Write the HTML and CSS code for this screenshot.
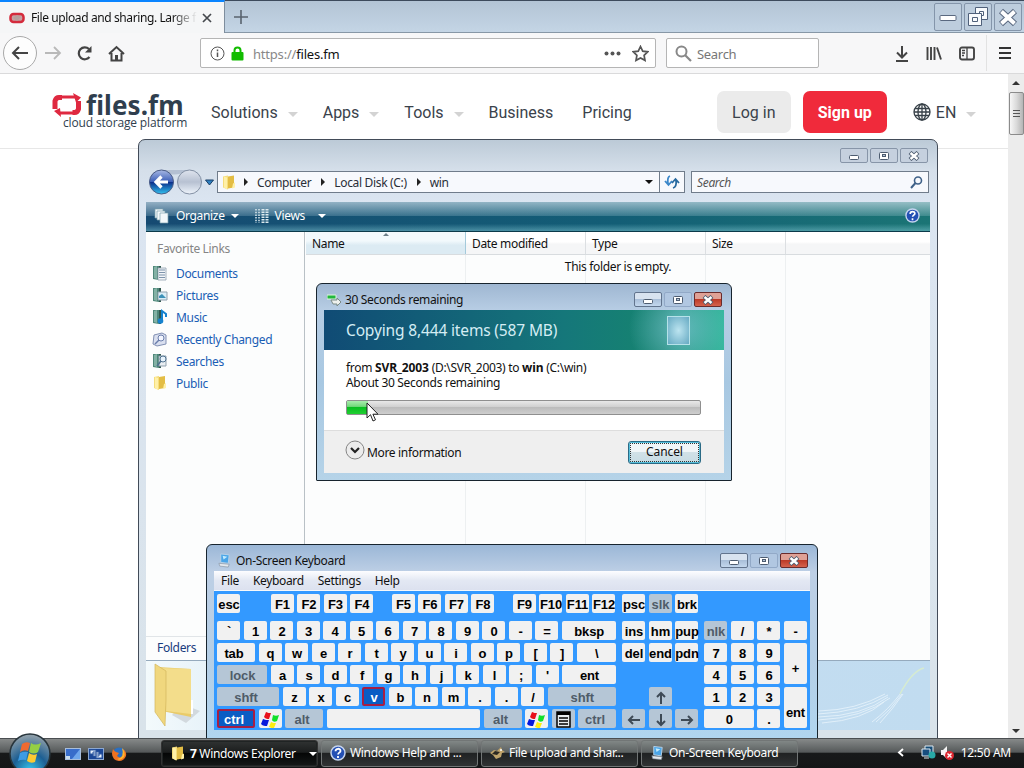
FILE: index.html
```html
<!DOCTYPE html>
<html lang="en">
<head>
    <meta charset="UTF-8">
    <meta name="viewport" content="width=device-width, initial-scale=1.0">
    <title>Desktop</title>
    <link rel="stylesheet" href="styles.css">
</head>
<body>

    <!-- shared icons -->
    <svg class="sprite" width="0" height="0">
        <symbol id="i-folder" viewBox="0 0 16 16"><path d="M2 2l5-1v14l-5-2z" fill="#f5dd7c"/><path d="M7 2l6-1v12l-6 1z" fill="#e3bd45"/><path d="M3 2l3 1v12l-3-2zM12 9l2-1v5l-3 1z" fill="#fff0a8"/></symbol>
        <symbol id="i-min" viewBox="0 0 12 10"><rect x="1.500" y="4.500" width="9" height="4" rx="1" fill="#fff" stroke="#4d5c70"/></symbol>
        <symbol id="i-max" viewBox="0 0 12 10"><rect x="1.500" y="1.500" width="9" height="7" rx="1" fill="#fff" stroke="#4d5c70"/><rect x="4.500" y="3.500" width="3" height="2" fill="#b8c8da" stroke="#4d5c70"/></symbol>
        <symbol id="i-x" viewBox="0 0 12 10"><path d="M2 1.500L10 8.500M10 1.500L2 8.500" stroke="#4d5c70" stroke-width="4.200"/><path d="M2.500 2L9.500 8M9.500 2L2.500 8" stroke="#fff" stroke-width="2.400"/></symbol>
        <symbol id="i-flag" viewBox="0 0 20 18"><path d="M5 1c2 1 3 1 5 1L8 8C6 8 5 8 3 6z" fill="#e8111c"/><path d="M12 4c2 1 4 1 6 0l-2 6c-2 1-4 1-5-1z" fill="#11e02a"/><path d="M2 8c2 1 4 1 6 1l-2 6c-2 0-4 0-6-2z" fill="#0618dc"/><path d="M10 11c2 1 3 1 5 1l-2 5c-2 0-3 0-5-1z" fill="#ffee12"/></symbol>
        <symbol id="i-help" viewBox="0 0 16 16"><circle cx="8" cy="8" r="7" fill="#2450b4" stroke="#c5d4ee" stroke-width="1.500"/><path d="M5.500 6.300c0-3.400 5-3.200 5-.4 0 1.700-2.400 1.800-2.400 3.500M8 11v2" stroke="#fff" stroke-width="1.800" fill="none"/></symbol>
        <symbol id="i-osk" viewBox="0 0 16 16"><path d="M4 1l9 1-1 9-8-1z" fill="#4aa5e8" stroke="#b9d2e8"/><path d="M6 3l5 1-4 3z" fill="#c2ecff"/><path d="M2 11l11 1-1 3-9-1z" fill="#e4e9ee" stroke="#8794a3" stroke-width=".7"/></symbol>
        <symbol id="i-book" viewBox="0 0 16 16"><path d="M1 1h6v14l-6-1z" fill="#4e8779"/><path d="M2 2l3-1v13l-3-1z" fill="#83b1a5"/><path d="M7 1h2v14H7z" fill="#31574f"/></symbol>
    </svg>

    <!-- browser -->
    <div class="browser">
        <div class="tab-strip">
            <div class="tab">
                <svg class="favicon" width="16" height="12" viewBox="0 0 16 12"><rect x="1.500" y="2" width="13" height="8" rx="3" fill="#c9a0a2" stroke="#d42b3c" stroke-width="2.500"/><path d="M4 6l4-3 4 2-4 4z" fill="#b5a09e"/></svg>
                <span class="tab-title">File upload and sharing. Large f</span>
                <svg class="tab-close" width="10" height="10" viewBox="0 0 10 10"><path d="M1 1l8 8M9 1L1 9" stroke="#45484d" stroke-width="1.700"/></svg>
            </div>
            <svg class="new-tab" width="14" height="14" viewBox="0 0 14 14"><path d="M7 0v14M0 7h14" stroke="#59636e" stroke-width="1.600"/></svg>
            <div class="big-controls">
                <span><svg width="20" height="20" viewBox="0 0 20 20"><rect x="2" y="8.500" width="16" height="5" rx="1" fill="#fff" stroke="#5a6980"/></svg></span>
                <span><svg width="22" height="22" viewBox="0 0 22 22"><g fill="#f8fafc" stroke="#4f607a"><path d="M8.500 1.500h12v12h-12z"/><path d="M12.500 5.500h4v4h-4z"/><path d="M1.500 7.500h13v12h-13z"/><path d="M5.500 11.500h5v4h-5z"/></g></svg></span>
                <span><svg width="20" height="20" viewBox="0 0 20 20"><path d="M3 4l14 13M17 4L3 17" stroke="#5a6980" stroke-width="6"/><path d="M3.500 4.500l13 12M16.500 4.500l-13 12" stroke="#fff" stroke-width="4"/></svg></span>
            </div>
        </div>

        <div class="nav-bar">
            <span class="back"><svg width="18" height="16" viewBox="0 0 18 16"><path d="M17 8H2M8 2L2 8l6 6" fill="none" stroke="#444" stroke-width="2"/></svg></span>
            <svg class="forward" width="17" height="16" viewBox="0 0 17 16"><path d="M0 8h15M9 2l6 6-6 6" fill="none" stroke="#b9b9b9" stroke-width="1.800"/></svg>
            <svg class="reload" width="17" height="17" viewBox="0 0 17 17"><path d="M13.500 12A6 6 0 1 1 13 4" fill="none" stroke="#444" stroke-width="2.200"/><path d="M15.500 1v6.500H9z" fill="#444"/></svg>
            <svg class="home" width="17" height="17" viewBox="0 0 17 17"><path d="M1 9l7.500-7L16 9M3.500 8v7.500h10V8" fill="none" stroke="#444" stroke-width="2"/><path d="M7 10h3v6H7z" fill="#444"/></svg>
            <div class="url-box">
                <svg width="15" height="15" viewBox="0 0 15 15"><circle cx="7.500" cy="7.500" r="6.500" fill="none" stroke="#555"/><path d="M7.500 6.500V11M7.500 3.500v1.800" stroke="#555" stroke-width="1.500"/></svg>
                <svg class="lock" width="13" height="15" viewBox="0 0 13 15"><path d="M3.500 7V4.500a3 3 0 0 1 6 0V7" fill="none" stroke="#12bc00" stroke-width="2"/><rect x=".5" y="6" width="12" height="8.500" rx="1" fill="#12bc00"/></svg>
                <span class="url"><i>https://</i>files.fm</span>
                <svg class="dots" width="17" height="5" viewBox="0 0 17 5"><g fill="#555"><circle cx="2.500" cy="2.500" r="2"/><circle cx="8.500" cy="2.500" r="2"/><circle cx="14.500" cy="2.500" r="2"/></g></svg>
                <svg width="17" height="17" viewBox="0 0 17 17"><path d="M8.500 1.500l2.200 4.600 5 .7-3.600 3.500.9 5-4.500-2.400L4 15.300l.9-5L1.300 6.800l5-.7z" fill="none" stroke="#555" stroke-width="1.700"/></svg>
            </div>
            <div class="search-box">
                <svg width="17" height="17" viewBox="0 0 17 17"><circle cx="6.500" cy="6.500" r="5" fill="none" stroke="#888" stroke-width="2"/><path d="M10 10l6 6" stroke="#888" stroke-width="2.200"/></svg>
                <span>Search</span>
            </div>
            <div class="nav-icons">
                <svg width="14" height="17" viewBox="0 0 14 17"><path d="M7 1v11M2 7.500l5 5 5-5M1 16h12" fill="none" stroke="#444" stroke-width="2"/></svg>
                <svg width="16" height="15" viewBox="0 0 16 15"><path d="M1.500 1v13M5 1v13M8.500 1v13M11 1.500l4 12" fill="none" stroke="#444" stroke-width="1.900"/></svg>
                <svg width="16" height="15" viewBox="0 0 16 15"><rect x="1" y="1.500" width="14" height="12" rx="2" fill="none" stroke="#444" stroke-width="1.900"/><path d="M8 2v11M3 4.500h3M3 7h3M3 9.500h2" stroke="#444" stroke-width="1.300"/></svg>
            </div>
            <div class="burger"><svg width="12" height="12" viewBox="0 0 12 12"><path d="M0 1h12M0 6h12M0 11h12" stroke="#333" stroke-width="2"/></svg></div>
        </div>

        <div class="page">
            <div class="site">
                <div class="site-header">
                    <div class="logo">
                        <svg width="30" height="24" viewBox="0 0 30 24"><g fill="none" stroke="#df2940"><path d="M3 16V8q1-3.500 4-3.500h3" stroke-width="5"/><path d="M9 4h14" stroke-width="3"/><path d="M26.500 8v8q-1 3.500-4 3.500h-2" stroke-width="5"/><path d="M21 20H8" stroke-width="3"/></g><path d="M21 0l8 4.500-5 5zM9 24l-7-6 6-3z" fill="#df2940"/></svg>
                        <div class="logo-text">
                            <b>files.fm</b>
                            <span>cloud storage platform</span>
                        </div>
                    </div>
                    <div class="menu">
                        <span class="drop">Solutions</span>
                        <span class="drop">Apps</span>
                        <span class="drop">Tools</span>
                        <span>Business</span>
                        <span>Pricing</span>
                    </div>
                    <span class="btn-login">Log in</span>
                    <span class="btn-signup">Sign up</span>
                    <div class="lang">
                        <svg width="18" height="18" viewBox="0 0 18 18"><g fill="none" stroke="#374048" stroke-width="1.300"><circle cx="9" cy="9" r="8"/><ellipse cx="9" cy="9" rx="4" ry="8"/><path d="M9 1v16M1 9h16M2 5.500h14M2 12.500h14"/></g></svg>
                        <span class="drop">EN</span>
                    </div>
                </div>
            </div>
            <div class="scrollbar">
                <span class="arrow-up"></span>
                <span class="thumb"><i></i><i></i><i></i></span>
                <span class="arrow-down"></span>
            </div>
        </div>
    </div>

    <!-- explorer -->
    <div class="window explorer">
        <div class="controls inactive">
            <span><svg><use href="#i-min"/></svg></span>
            <span><svg><use href="#i-max"/></svg></span>
            <span><svg><use href="#i-x"/></svg></span>
        </div>
        <div class="address-row">
            <svg class="travel" width="69" height="28" viewBox="0 0 69 28">
                <defs><linearGradient id="blueball" x2="0" y2="1"><stop offset="0" stop-color="#a9b9e4"/><stop offset=".48" stop-color="#3d60b8"/><stop offset=".5" stop-color="#0b2b88"/><stop offset="1" stop-color="#31c2f0"/></linearGradient>
                <linearGradient id="greyball" x2="0" y2="1"><stop offset="0" stop-color="#dfe4ee"/><stop offset=".5" stop-color="#b7c1d2"/><stop offset="1" stop-color="#eef4fb"/></linearGradient></defs>
                <path d="M15 2h28q-13 8-28 2z" fill="#b4c0d2"/>
                <circle cx="15.500" cy="14" r="12" fill="url(#blueball)" stroke="#4a5c86"/>
                <path d="M22 14H11M15.500 8.500L10 14l5.500 5.500" fill="none" stroke="#fff" stroke-width="3.200"/>
                <circle cx="43.500" cy="14" r="12" fill="url(#greyball)" stroke="#8390a4"/>
                <path d="M59.500 12h8l-4 5z" fill="#2d7fc0" stroke="#1b3f66"/>
            </svg>
            <div class="address">
                <svg width="16" height="17"><use href="#i-folder"/></svg>
                <i class="tri"></i><span class="crumb">Computer</span>
                <i class="tri"></i><span class="crumb">Local Disk (C:)</span>
                <i class="tri"></i><span>win</span>
                <i class="caret"></i>
            </div>
            <div class="refresh"><svg width="16" height="14" viewBox="0 0 16 14"><path d="M6 1Q3 2 4 9M1 6l3.500 4L8 6" fill="none" stroke="#3b87c9" stroke-width="1.800"/><path d="M9 13q4-1 3-8M8 8l3.500-4L15 8" fill="none" stroke="#27699f" stroke-width="1.800"/></svg></div>
            <div class="find"><span>Search</span><svg width="13" height="13" viewBox="0 0 13 13"><circle cx="8" cy="4.500" r="3.500" fill="none" stroke="#3f6188" stroke-width="1.600"/><path d="M5.500 7L1 12" stroke="#3f6188" stroke-width="2"/></svg></div>
        </div>
        <div class="command-bar">
            <svg width="15" height="16" viewBox="0 0 15 16"><g fill="#f3f8fa" stroke="#7ba0ae" stroke-width=".7"><path d="M1 1h8v9H1z"/><path d="M3 3h8v9H3z"/><path d="M6 5h8v10H6z"/></g></svg>
            <span class="organize">Organize</span><i class="caret white"></i>
            <svg class="views-icon" width="14" height="14" viewBox="0 0 14 14"><path d="M1 0v14M4 0v14" stroke="#dbe9ee" stroke-width="1.500" stroke-dasharray="1.500 1.200"/><path d="M8 0v14M12 0v14" stroke="#dbe9ee" stroke-width="3" stroke-dasharray="1.500 1"/></svg>
            <span class="views">Views</span><i class="caret white"></i>
            <svg class="help" width="15" height="15"><use href="#i-help"/></svg>
        </div>
        <div class="explorer-body">
            <div class="sidebar">
                <h4>Favorite Links</h4>
                <a><svg viewBox="0 0 16 16"><use href="#i-book"/><path d="M6 3h8v12H6z" fill="#f2f5f8" stroke="#8fa0ad" stroke-width=".8"/><path d="M7 5h6M7 7.500h6M7 10h6M7 12.500h6" stroke="#7d93ab"/></svg>Documents</a>
                <a><svg viewBox="0 0 16 16"><use href="#i-book"/><path d="M6 5h9v8H6z" fill="#d9edf7" stroke="#8fa0ad"/><path d="M7 9l3-2 4 4H7z" fill="#3c91b8"/></svg>Pictures</a>
                <a><svg viewBox="0 0 16 16"><use href="#i-book"/><path d="M10 12V2l4 3v3" fill="none" stroke="#1582cf" stroke-width="2"/><circle cx="8.500" cy="12" r="2.800" fill="#1582cf"/></svg>Music</a>
                <a><svg viewBox="0 0 16 16"><path d="M2 4l8-2 4 2v9l-9 2-4-2z" fill="#d9dfef" stroke="#8190b3"/><circle cx="9" cy="7" r="3" fill="#f3f6ff" stroke="#6a7eab"/><path d="M7 9l-4 4" stroke="#6a7eab" stroke-width="1.500"/></svg>Recently Changed</a>
                <a><svg viewBox="0 0 16 16"><use href="#i-book"/><path d="M7 3h7v10H7z" fill="#e9eef2" stroke="#8fa0ad"/><circle cx="11" cy="6" r="3" fill="#e7f3fc" stroke="#50718e"/><path d="M9 8l-4 5" stroke="#50718e" stroke-width="1.600"/></svg>Searches</a>
                <a><svg viewBox="0 0 16 16"><use href="#i-folder"/></svg>Public</a>
                <div class="folders">Folders</div>
            </div>
            <div class="file-list">
                <div class="columns">
                    <span class="sorted">Name</span><span>Date modified</span><span>Type</span><span>Size</span>
                </div>
                <div class="empty-list">
                    <i></i><i></i><i></i><i></i>
                    <p>This folder is empty.</p>
                </div>
            </div>
        </div>
        <div class="details">
            <svg width="56" height="66" viewBox="0 0 56 66"><path d="M36 42l18 7-14 12-14-8z" fill="#c8cdd2" opacity=".7"/><path d="M12 5l33 2v48l-29-6z" fill="#e9cb69"/><path d="M14 6l31 1v45l-25-3z" fill="#f3dd8b"/><path d="M9 2l11 7v29l-1 26L9 50z" fill="#f0d77e" stroke="#d3b65c" stroke-width=".7"/><path d="M46 38v14" stroke="#fff" stroke-width="2"/></svg>
            <svg class="streaks" width="112" height="68" viewBox="0 0 112 68"><g fill="none" stroke="#e8f4fb" stroke-width=".8"><path d="M0 54Q42 52 70 35M0 57Q45 56 70 37M0 60Q45 58 72 38M1 51Q38 50 67 34M4 63Q46 60 66 42"/><path d="M54 62Q70 50 83 33M58 62Q72 51 84 34M62 63Q75 49 85 34"/></g><path d="M82 34Q94 11 106 8" fill="none" stroke="#d6ebd0" stroke-width="1.500"/></svg>
        </div>
    </div>

    <!-- copy dialog -->
    <div class="window dialog">
        <div class="title-bar">
            <svg width="14" height="14" viewBox="0 0 14 14"><path d="M0 2h9v4H0z" fill="#22b83d" stroke="#dff3df"/><path d="M4 7h6V5l4 4-4 4v-2H6z" fill="#eef1ee" stroke="#7b8b87"/></svg>
            <span class="title">30 Seconds remaining</span>
            <div class="controls">
                <span><svg><use href="#i-min"/></svg></span>
                <span class="disabled"><svg><use href="#i-max"/></svg></span>
                <span class="close"><svg><use href="#i-x"/></svg></span>
            </div>
        </div>
        <div class="banner"><span>Copying 8,444 items (587 MB)</span><i></i></div>
        <div class="dialog-body">
            <p>from <b>SVR_2003</b> (D:\SVR_2003) to <b>win</b> (C:\win)</p>
            <p class="about">About 30 Seconds remaining</p>
            <div class="progress"><i></i></div>
        </div>
        <div class="dialog-footer">
            <svg width="20" height="20" viewBox="0 0 20 20"><circle cx="10" cy="10" r="9" fill="#ececec" stroke="#858585"/><path d="M6 8l4 4 4-4" fill="none" stroke="#222" stroke-width="2.200"/></svg>
            <span class="more">More information</span>
            <button>Cancel</button>
        </div>
        <svg class="cursor" width="13" height="20" viewBox="0 0 13 20"><path d="M1 1v15l3.500-3.300L7 19l2.500-1.200-2.600-5.600H12z" fill="#fff" stroke="#222"/></svg>
    </div>

    <!-- on-screen keyboard -->
    <div class="window osk">
        <div class="title-bar">
            <svg width="15" height="15"><use href="#i-osk"/></svg>
            <span class="title">On-Screen Keyboard</span>
            <div class="controls">
                <span><svg><use href="#i-min"/></svg></span>
                <span class="disabled"><svg><use href="#i-max"/></svg></span>
                <span class="close"><svg><use href="#i-x"/></svg></span>
            </div>
        </div>
        <div class="osk-menu"><span>File</span><span>Keyboard</span><span>Settings</span><span>Help</span></div>
        <div class="keys">
            <div class="main-keys">
                <div class="row fn">
                    <kbd>esc</kbd>
                    <kbd class="g1">F1</kbd><kbd>F2</kbd><kbd>F3</kbd><kbd>F4</kbd>
                    <kbd class="g2">F5</kbd><kbd>F6</kbd><kbd>F7</kbd><kbd>F8</kbd>
                    <kbd class="g2">F9</kbd><kbd>F10</kbd><kbd>F11</kbd><kbd>F12</kbd>
                </div>
                <div class="row"><kbd>`</kbd><kbd>1</kbd><kbd>2</kbd><kbd>3</kbd><kbd>4</kbd><kbd>5</kbd><kbd>6</kbd><kbd>7</kbd><kbd>8</kbd><kbd>9</kbd><kbd>0</kbd><kbd>-</kbd><kbd>=</kbd><kbd class="fill">bksp</kbd></div>
                <div class="row"><kbd class="w38">tab</kbd><kbd>q</kbd><kbd>w</kbd><kbd>e</kbd><kbd>r</kbd><kbd>t</kbd><kbd>y</kbd><kbd>u</kbd><kbd>i</kbd><kbd>o</kbd><kbd>p</kbd><kbd>[</kbd><kbd>]</kbd><kbd class="fill">\</kbd></div>
                <div class="row"><kbd class="w50 mod">lock</kbd><kbd>a</kbd><kbd>s</kbd><kbd>d</kbd><kbd>f</kbd><kbd>g</kbd><kbd>h</kbd><kbd>j</kbd><kbd>k</kbd><kbd>l</kbd><kbd>;</kbd><kbd>'</kbd><kbd class="fill">ent</kbd></div>
                <div class="row"><kbd class="w62 mod">shft</kbd><kbd>z</kbd><kbd>x</kbd><kbd>c</kbd><kbd class="down">v</kbd><kbd>b</kbd><kbd>n</kbd><kbd>m</kbd><kbd>.</kbd><kbd>.</kbd><kbd>/</kbd><kbd class="fill mod">shft</kbd></div>
                <div class="row"><kbd class="w38 down">ctrl</kbd><kbd><svg width="20" height="18"><use href="#i-flag"/></svg></kbd><kbd class="w38 mod">alt</kbd><kbd class="fill"></kbd><kbd class="w38 mod">alt</kbd><kbd><svg width="20" height="18"><use href="#i-flag"/></svg></kbd><kbd class="mod"><svg width="15" height="17" viewBox="0 0 15 17"><rect x="1" y="1" width="13" height="15" fill="#e8edf0" stroke="#000" stroke-width="1.500"/><path d="M1 2.500h13" stroke="#000" stroke-width="3"/><path d="M3 7h9M3 10h9M3 13h9" stroke="#000" stroke-width="1.500"/></svg></kbd><kbd class="w38 mod">ctrl</kbd></div>
            </div>
            <div class="nav-keys">
                <kbd>psc</kbd><kbd class="mod">slk</kbd><kbd>brk</kbd>
                <kbd>ins</kbd><kbd>hm</kbd><kbd>pup</kbd>
                <kbd>del</kbd><kbd>end</kbd><kbd>pdn</kbd>
                <kbd class="mod up"><svg viewBox="0 0 14 14"><path d="M7 13V2M3 6l4-4 4 4"/></svg></kbd>
                <kbd class="mod"><svg viewBox="0 0 14 14"><path d="M13 7H2M6 3L2 7l4 4"/></svg></kbd>
                <kbd class="mod"><svg viewBox="0 0 14 14"><path d="M7 1v11M3 8l4 4 4-4"/></svg></kbd>
                <kbd class="mod"><svg viewBox="0 0 14 14"><path d="M1 7h11M8 3l4 4-4 4"/></svg></kbd>
            </div>
            <div class="num-keys">
                <kbd class="mod">nlk</kbd><kbd>/</kbd><kbd>*</kbd><kbd>-</kbd>
                <kbd>7</kbd><kbd>8</kbd><kbd>9</kbd><kbd class="tall">+</kbd>
                <kbd>4</kbd><kbd>5</kbd><kbd>6</kbd>
                <kbd>1</kbd><kbd>2</kbd><kbd>3</kbd><kbd class="tall">ent</kbd>
                <kbd class="wide">0</kbd><kbd>.</kbd>
            </div>
        </div>
    </div>

    <!-- taskbar -->
    <div class="taskbar">
        <svg class="start" width="44" height="36" viewBox="0 0 44 36">
            <defs><radialGradient id="orb" cx=".5" cy=".9" r=".85"><stop offset="0" stop-color="#35c4ec"/><stop offset=".5" stop-color="#1d5f93"/><stop offset="1" stop-color="#8b9ca8"/></radialGradient></defs>
            <circle cx="22" cy="21" r="20" fill="url(#orb)" stroke="#27343b" stroke-width="1.500"/>
            <path d="M14 11q4-3 8-1l-2 8q-4-2-8 1z" fill="#f06a30"/><path d="M23 10q4 3 10 0l-3 9q-4 3-9 0z" fill="#95cf44"/><path d="M12 20q4-2 8-1l-2 8q-4-1-8 1z" fill="#3d9be4"/><path d="M21 20q4 3 8 1l-2 8q-4 2-8-1z" fill="#fcca32"/>
        </svg>
        <div class="quick">
            <svg width="16" height="14" viewBox="0 0 16 14"><rect x=".5" y="1.500" width="15" height="11" fill="#386dca" stroke="#a8bedc"/><path d="M15 2v10H7z" fill="#6fa7ec"/><path d="M1 9h4v3H1z" fill="#c9dded"/></svg>
            <svg width="16" height="14" viewBox="0 0 16 14"><rect x=".5" y="1.500" width="15" height="11" fill="#1b4796" stroke="#8ca7d0"/><path d="M2 3h6v4H2zM5 5h6v4H5zM8 7h6v4H8z" fill="#e6f0fc" stroke="#2c579e"/></svg>
            <svg width="16" height="16" viewBox="0 0 16 16"><circle cx="8" cy="8" r="6.500" fill="#2b6fc1"/><path d="M2 3q2 3 3 3l3 1-2 3q4 4 7-3l-1-4q4 3 3 7-2 5-7 5-7-1-7-8z" fill="#ef7221"/><path d="M11 2q4 4 2 9-3 4-7 2 8-1 5-11z" fill="#ffb52c"/></svg>
        </div>
        <div class="tasks">
            <div class="task active"><svg width="16" height="17"><use href="#i-folder"/></svg><span><b>7</b> Windows Explorer</span><i class="caret white"></i></div>
            <div class="task"><svg width="16" height="16"><use href="#i-help"/></svg><span>Windows Help and ...</span></div>
            <div class="task"><svg width="15" height="14" viewBox="0 0 15 14"><path d="M0 7l4-3 3 1 4-4 1 3 3 2-3 1-1 4-5 2-3-4z" fill="#c1a46b"/><path d="M5 5l5 1-3 3-5-1z" fill="#2c2922"/><circle cx="11" cy="4" r="1" fill="#fff"/></svg><span>File upload and shar...</span></div>
            <div class="task"><svg width="15" height="16"><use href="#i-osk"/></svg><span>On-Screen Keyboard</span></div>
        </div>
        <div class="tray">
            <svg width="7" height="9" viewBox="0 0 7 9"><path d="M6 1L2 4.500 6 8" fill="none" stroke="#fff" stroke-width="1.900"/></svg>
            <svg class="net" width="15" height="15" viewBox="0 0 15 15"><path d="M4 1h8v7H4z" fill="#154c77" stroke="#dfeaf2"/><path d="M1 4h8v7H1zM3 13h5" fill="#174d7e" stroke="#dfeaf2"/><circle cx="11" cy="10" r="3.500" fill="#28a9a6"/></svg>
            <svg class="vol" width="15" height="16" viewBox="0 0 15 16"><path d="M1 5h2l4-4v13l-4-4H1z" fill="#f4f4f4"/><circle cx="9.500" cy="10.500" r="4.500" fill="#dc2730"/><path d="M7.500 8.500l4 4M11.500 8.500l-4 4" stroke="#fff" stroke-width="1.400"/></svg>
            <span>12:50 AM</span>
        </div>
    </div>

</body>
</html>
```
FILE: styles.css
```css
:root {
    --ui-font: "Noto Sans", "Open Sans", sans-serif;
    --link: #1a5eb5;
    --key-blue: #3399ff;
}

* {
    box-sizing: border-box;
}

body {
    margin: 0;
    width: 1024px;
    height: 768px;
    position: relative;
    overflow: hidden;
    background: #fff;
    font-family: var(--ui-font);
    font-size: 12px;
    letter-spacing: -0.33px;
    color: #111;
    white-space: nowrap;
}

.sprite {
    position: absolute;
}

svg {
    display: block;
    flex: none;
}

p, h4 {
    margin: 0;
    font-weight: normal;
}

/* Browser */
.browser {
    height: 738px;
    display: flex;
    flex-direction: column;
}

.tab-strip {
    height: 33px;
    display: flex;
    align-items: center;
    background: linear-gradient(#b3c4d5, #c4d5e5);
    border-top: 1px solid #3d4a5c;
    border-bottom: 1px solid #8797a6;
}

.tab {
    width: 225px;
    height: 33px;
    margin-top: -1px;
    align-self: flex-start;
    display: flex;
    align-items: center;
    padding: 0 12px 0 9px;
    background: #f5f6f7;
    border-top: 2px solid #0a84ff;
    border-right: 1px solid #7e8d9d;
}

.tab-title {
    width: 166px;
    margin-left: 6px;
    letter-spacing: -0.4px;
    -webkit-mask-image: linear-gradient(90deg, #000 85%, transparent);
    mask-image: linear-gradient(90deg, #000 85%, transparent);
}

.tab-close {
    margin-left: auto;
}

.new-tab {
    margin-left: 9px;
}

.big-controls {
    display: flex;
    gap: 2px;
    margin-left: auto;
    padding-right: 2px;
}

.big-controls span {
    width: 28px;
    height: 28px;
    display: flex;
    align-items: center;
    justify-content: center;
    border: 1px solid #8495aa;
    border-radius: 2px;
    background: #bdcddd;
}

.nav-bar {
    height: 41px;
    display: flex;
    align-items: center;
    background: #f7f7f8;
    border-bottom: 1px solid #dadadb;
    padding-left: 3px;
}

.back {
    width: 34px;
    height: 34px;
    display: flex;
    align-items: center;
    justify-content: center;
    border: 1px solid #a9a9a9;
    border-radius: 50%;
    background: #fdfdfd;
}

.forward {
    margin-left: 8px;
}

.reload {
    margin-left: 14px;
}

.home {
    margin-left: 15px;
}

.url-box,
.search-box {
    height: 30px;
    display: flex;
    align-items: center;
    border: 1px solid #b5b5b5;
    border-radius: 2px;
    background: #fff;
    font-size: 13px;
}

.url-box {
    width: 456px;
    margin-left: 75px;
    padding: 0 6px 0 9px;
}

.lock {
    margin-left: 6px;
}

.url {
    margin: 2px 0 0 9px;
    letter-spacing: -0.2px;
}

.url i {
    font-style: normal;
    color: #888;
}

.dots {
    margin-left: auto;
    margin-right: 11px;
}

.search-box {
    width: 153px;
    margin-left: 10px;
    padding-left: 8px;
    color: #777;
}

.search-box span {
    margin: 2px 0 0 5px;
    letter-spacing: -0.3px;
}

.nav-icons {
    display: flex;
    align-items: center;
    gap: 17px;
    margin-left: 76px;
}

.burger {
    height: 36px;
    display: flex;
    align-items: center;
    margin-left: 11px;
    padding-left: 12px;
    border-left: 1px solid #e2e2e2;
}

.page {
    flex: 1;
    display: flex;
    background: #fff;
}

.site {
    flex: 1;
}

.site-header {
    height: 75px;
    display: flex;
    align-items: center;
    padding: 1px 0 0 52px;
    border-bottom: 1px solid #e7e7e7;
    font-family: Roboto, sans-serif;
    font-size: 16px;
    letter-spacing: 0;
    color: #3a424b;
}

.logo {
    display: flex;
    width: 136px;
}

.logo svg {
    margin-top: 1px;
}

.logo-text {
    height: 40px;
    display: flex;
    flex-direction: column;
    font-family: var(--ui-font);
    color: #2f3e4e;
}

.logo-text b {
    margin-left: 4px;
    font-size: 26px;
    line-height: 26px;
    letter-spacing: 0.1px;
}

.logo-text span {
    margin-left: -19px;
    font-family: "Open Sans", sans-serif;
    font-size: 12px;
    line-height: 10px;
    letter-spacing: -0.15px;
}

.menu {
    display: flex;
    margin: 1px 0 0 23px;
    gap: 25px;
}

.menu span:nth-child(5) {
    margin-left: 4px;
}

.drop::after {
    content: "";
    display: inline-block;
    margin-left: 10px;
    border: 5px solid transparent;
    border-top-color: #d3d3d3;
    border-bottom: 0;
    vertical-align: 1px;
}

.btn-login,
.btn-signup {
    height: 42px;
    line-height: 43px;
    text-align: center;
    border-radius: 7px;
}

.btn-login {
    width: 74px;
    margin-left: 85px;
    background: #ebebeb;
}

.btn-signup {
    width: 84px;
    margin-left: 12px;
    background: #f02a3b;
    color: #fff;
    font-weight: bold;
}

.lang {
    display: flex;
    align-items: center;
    margin: 1px 0 0 26px;
    gap: 5px;
}

.scrollbar {
    width: 16px;
    display: flex;
    flex-direction: column;
    align-items: center;
    background: #ececec;
    padding: 7px 0 5px;
}

.arrow-up,
.arrow-down {
    border: 4px solid transparent;
}

.arrow-up {
    border-top: 0;
    border-bottom-color: #333;
}

.arrow-down {
    margin-top: auto;
    border-bottom: 0;
    border-top-color: #333;
}

.thumb {
    width: 15px;
    height: 43px;
    margin-top: 7px;
    display: flex;
    flex-direction: column;
    align-items: center;
    justify-content: center;
    gap: 2px;
    border: 1px solid #8b8b8b;
    border-radius: 2px;
    background: linear-gradient(90deg, #f7f7f7, #dadada 50%, #b5b5b5);
}

.thumb i {
    width: 7px;
    height: 1px;
    background: #555;
}

/* Window frames */
.window {
    position: absolute;
    border: 1px solid #17242e;
}

.title-bar {
    display: flex;
    align-items: center;
    height: 26px;
    padding-top: 5px;
}

.controls {
    display: flex;
    gap: 2px;
    margin-left: auto;
}

.controls span {
    width: 28px;
    height: 15px;
    display: flex;
    align-items: center;
    justify-content: center;
    border: 1px solid #62748d;
    border-radius: 2px;
    background: linear-gradient(#d8e3f0 45%, #a9bfd9 50%, #c3d7ed);
}

.controls svg {
    width: 12px;
    height: 10px;
}

.controls.inactive span {
    border-color: #8795a8;
    background: #c5d0de;
}

.controls .disabled {
    border-color: #92a9c7;
    background: #b1c7e1;
}

.controls .close {
    border-color: #692b2c;
    background: linear-gradient(#dfa196 45%, #bd3b28 50%, #d5624d);
}

.caret {
    border: 4px solid transparent;
    border-top-color: #111;
    border-bottom: 0;
}

.caret.white {
    border-top-color: #fff;
}

/* Explorer */
.explorer {
    left: 138px;
    top: 139px;
    width: 800px;
    height: 600px;
    padding: 0 7px;
    display: flex;
    flex-direction: column;
    border-color: #424b58;
    border-radius: 7px 7px 0 0;
    background: linear-gradient(#bccad7, #d5dfea 30px, #dbe5f1 62px, #d9e3ea);
}

.explorer > .controls {
    padding: 8px 2px 0 0;
}

.address-row {
    display: flex;
    align-items: center;
    height: 38px;
}

.travel {
    margin-right: 2px;
}

.address,
.refresh,
.find {
    height: 22px;
    display: flex;
    align-items: center;
    border: 1px solid #707c8b;
    background: #f7f9fd;
}

.address {
    width: 443px;
    padding: 0 6px 0 3px;
    color: #2a2f38;
}

.crumb {
    margin-right: 3px;
}

.address .tri {
    margin: 0 9px 0 7px;
    border: 4px solid transparent;
    border-left-color: #222;
    border-right: 0;
}

.address .caret {
    margin-left: auto;
}

.refresh {
    width: 26px;
    margin-left: -1px;
    justify-content: center;
}

.find {
    width: 238px;
    margin-left: 6px;
    padding: 0 5px;
    justify-content: space-between;
    color: #555;
    font-style: italic;
}

.command-bar {
    height: 30px;
    display: flex;
    align-items: center;
    margin-top: 1px;
    padding: 0 10px 2px 8px;
    color: #fff;
    border-bottom: 1px solid #0b3a4a;
    background:
        linear-gradient(rgba(215, 230, 240, 0.65), rgba(190, 220, 230, 0.22) 48%, transparent 50%, transparent 75%, rgba(140, 210, 220, 0.45)),
        linear-gradient(90deg, #164a72, #135e76 60%, #1b7575);
}

.organize {
    margin: 0 6px 0 7px;
}

.views-icon {
    margin: 0 6px 0 16px;
}

.views {
    margin-right: 13px;
}

.help {
    margin-left: auto;
}

.explorer-body {
    flex: 1;
    display: flex;
    background: #fcfdfd;
}

.sidebar {
    width: 159px;
    display: flex;
    flex-direction: column;
    padding-top: 6px;
    border-right: 1px solid #b9c1c6;
}

.sidebar h4 {
    margin: 0 0 2px 11px;
    line-height: 22px;
    color: #858585;
}

.sidebar a {
    height: 22px;
    display: flex;
    align-items: center;
    gap: 8px;
    padding-left: 6px;
    color: var(--link);
}

.sidebar a svg {
    width: 16px;
    height: 16px;
}

.folders {
    margin-top: auto;
    height: 24px;
    padding-left: 11px;
    line-height: 22px;
    color: #183b7d;
    border-top: 1px solid #e1e5e8;
}

.file-list {
    flex: 1;
    display: flex;
    flex-direction: column;
    padding-left: 1px;
}

.columns {
    height: 23px;
    display: flex;
    border-bottom: 1px solid #d8dcdf;
    background: linear-gradient(#fff 45%, #f5f6f7 55%);
}

.columns span {
    width: 120px;
    padding-left: 6px;
    line-height: 23px;
    border-right: 1px solid #dcdfe2;
}

.columns span:last-child {
    width: 80px;
}

.columns .sorted {
    position: relative;
    width: 160px;
    border-color: #a4cadb;
    background: linear-gradient(#f2f9fc 40%, #dcebf3 60%);
}

/* sort direction mark */
.columns .sorted::after {
    content: "";
    position: absolute;
    left: 77px;
    top: 1px;
    border: 3px solid transparent;
    border-bottom-color: #6c7e88;
    border-top: 0;
}

.empty-list {
    flex: 1;
    display: flex;
    position: relative;
}

.empty-list i {
    width: 120px;
    border-right: 1px solid #edf0f1;
}

.empty-list i:first-child {
    width: 160px;
}

.empty-list i:nth-child(4) {
    width: 80px;
}

.empty-list p {
    position: absolute;
    top: 3px;
    width: 100%;
    text-align: center;
}

.details {
    height: 70px;
    display: flex;
    justify-content: space-between;
    align-items: flex-end;
    padding-bottom: 2px;
    margin-bottom: 8px;
    border-top: 1px solid #95aabd;
    background: linear-gradient(90deg, #f3fafc, #c6def1 30%, #c1dcf0);
}

/* Copy dialog */
.dialog {
    left: 316px;
    top: 283px;
    width: 416px;
    height: 198px;
    padding: 0 7px;
    border-radius: 6px 6px 1px 1px;
    background: linear-gradient(#9fb7d2, #b7cde4 26px, #a8c8e2 50%, #b5d3e8);
}

.dialog .title-bar,
.osk .title-bar {
    padding-right: 2px;
}

.dialog .title-bar {
    padding-left: 3px;
}

.dialog .title {
    margin-left: 4px;
}

.banner {
    height: 40px;
    display: flex;
    align-items: center;
    padding-left: 22px;
    background:
        radial-gradient(circle at 355px 18px, rgba(140, 205, 225, 0.65), transparent 50px),
        linear-gradient(90deg, #104b75, #15777a 60%, #16856f 85%, #35b79d);
    color: #d4edf4;
    font-size: 15.5px;
    letter-spacing: -0.15px;
}

.banner i {
    width: 23px;
    height: 29px;
    margin-left: auto;
    margin-right: 34px;
    border: 1px solid #b6e2e9;
    background: radial-gradient(#bce4f0, #65a9c2);
}

.dialog-body {
    height: 80px;
    padding: 10px 23px 0 22px;
    background: #fff;
}

.dialog-body p {
    line-height: 15px;
    letter-spacing: -0.3px;
}

.dialog-body b {
    letter-spacing: -0.1px;
}

.progress {
    height: 15px;
    margin-top: 10px;
    border: 1px solid #8f8f8f;
    border-radius: 2px;
    background: linear-gradient(#e8e8e8, #d0d0d0 45%, #bcbcbc 50%, #cecece);
}

.progress i {
    display: block;
    width: 21px;
    height: 13px;
    background: linear-gradient(#a9ecae, #73d87b 42%, #08bd20 48%, #21cf32);
}

.dialog-footer {
    height: 43px;
    display: flex;
    align-items: center;
    padding: 0 23px 0 21px;
    border-top: 1px solid #ddd;
    background: #efefef;
}

.dialog-footer svg {
    margin-top: -4px;
}

.more {
    margin: 1px 0 0 2px;
}

.dialog-footer button {
    width: 73px;
    height: 23px;
    padding: 0 0 2px;
    margin-left: auto;
    font: inherit;
    letter-spacing: -0.1px;
    color: #111;
    border: 1px solid #2a6a85;
    border-radius: 3px;
    background: linear-gradient(#f1f6f8 45%, #d1e1e7 50%, #c7dce4);
    box-shadow: inset 0 0 0 1px #56bfdb;
    outline: 1px dotted #333;
    outline-offset: -3px;
}

.cursor {
    position: absolute;
    left: 49px;
    top: 118px;
}

/* On-screen keyboard */
.osk {
    left: 206px;
    top: 544px;
    width: 612px;
    height: 195px;
    padding: 0 7px;
    border-radius: 6px 6px 0 0;
    background: linear-gradient(#9bb7d7, #bdcfe5 27px, #b5cfe6 60%, #b0d5ef);
}

.osk .title-bar {
    padding-left: 3px;
}

.osk .title {
    margin-left: 4px;
}

.osk-menu {
    height: 20px;
    display: flex;
    gap: 14px;
    padding-left: 7px;
    line-height: 19px;
    background: linear-gradient(#fdfdff, #e3e8f3 50%, #dce1ef);
    border-bottom: 1px solid #f7f8fa;
}

.keys {
    height: 139px;
    display: flex;
    padding: 3px 3px 0;
    background: var(--key-blue);
}

.main-keys {
    width: 399px;
}

.row {
    height: 19px;
    display: flex;
    gap: 3.5px;
    margin-bottom: 3px;
}

.row.fn {
    margin-bottom: 8px;
}

kbd {
    width: 23px;
    height: 19px;
    display: flex;
    flex: none;
    align-items: center;
    justify-content: center;
    border-radius: 2px;
    background: #f1f1f1;
    font: bold 13px "Liberation Sans", Arial, sans-serif;
    letter-spacing: -0.1px;
    padding: 2px 0 0 1px;
    color: #000;
}

kbd.g1 {
    margin-left: 27px;
}

kbd.g2 {
    margin-left: 15px;
}

kbd.w38 {
    width: 38px;
    padding-right: 5px;
}

kbd.w50 {
    width: 50px;
}

kbd.w62 {
    width: 62px;
    padding-right: 5px;
}

kbd.fill {
    flex: 1;
}

kbd.mod {
    background: #b5c6d6;
    color: #4f5c69;
}

kbd.down {
    background: #0a5cc4;
    color: #fff;
    border: 2px solid #a51f45;
    padding-top: 1px;
}

.nav-keys,
.num-keys {
    display: grid;
    grid-auto-rows: 19px;
    gap: 3px 3.5px;
    align-content: start;
}

.nav-keys {
    grid-template-columns: repeat(3, 23px);
    grid-template-rows: 19px 24px 19px 19px 19px 19px;
    margin-left: 6px;
}

.nav-keys kbd {
    align-self: end;
}

.nav-keys .up {
    grid-column: 2;
    grid-row: 5;
}

.nav-keys kbd.up ~ kbd {
    grid-row: 6;
}

.nav-keys svg {
    width: 14px;
    height: 14px;
    fill: none;
    stroke: #3e4a56;
    stroke-width: 2;
}

.num-keys {
    grid-template-columns: repeat(4, 23px);
    margin: 27px 0 0 6px;
}

.num-keys .tall {
    grid-row: span 2;
    height: auto;
    padding-top: 9px;
}

.num-keys .wide {
    grid-column: span 2;
    width: auto;
}

/* Taskbar */
.taskbar {
    position: absolute;
    left: 0;
    top: 738px;
    width: 1024px;
    height: 30px;
    display: flex;
    align-items: center;
    color: #fff;
    border-top: 1px solid #4a4e51;
    background: linear-gradient(#868989, #55595a 45%, #17191a 50%, #141617);
}

.start {
    margin: -6px 0 0 8px;
}

.quick {
    display: flex;
    align-items: center;
    gap: 7px;
    margin-left: 13px;
}

.tasks {
    display: flex;
    gap: 3px;
    margin-left: 34px;
}

.task {
    width: 157px;
    height: 27px;
    display: flex;
    align-items: center;
    gap: 4px;
    padding: 0 8px 2px;
    border: 1px solid #727676;
    border-radius: 3px;
    background: linear-gradient(#818786, #5c6161 45%, #202223 50%, #303334);
}

.task.active {
    background: linear-gradient(#303333, #1b1d1d 45%, #050606 50%, #151818);
    border-color: #333;
    box-shadow: inset 0 0 0 1px #202424;
    padding: 0 0 0 8px;
}

.task.active .caret {
    margin-left: auto;
}

.tray {
    display: flex;
    align-items: center;
    margin-left: auto;
    padding: 0 13px 2px 0;
    letter-spacing: -0.25px;
}

.net {
    margin-left: 17px;
}

.vol {
    margin: 0 6px 0 4px;
}
```
